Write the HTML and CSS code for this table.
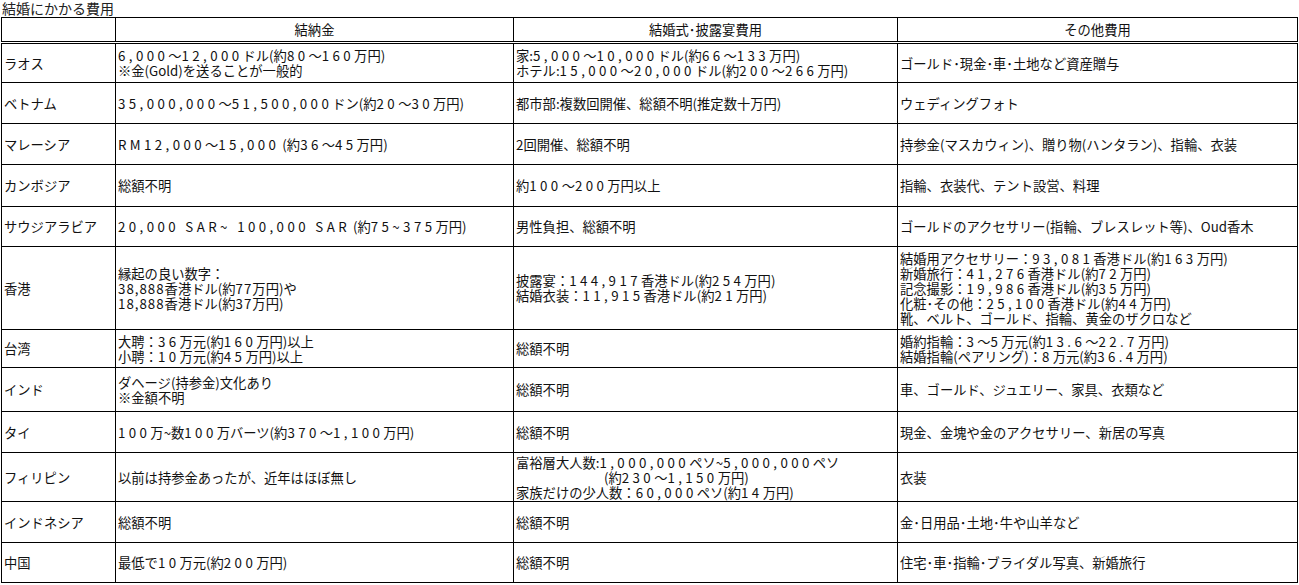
FILE: index.html
```html
<!DOCTYPE html>
<html lang="ja">
<head>
<meta charset="utf-8">
<title>結婚にかかる費用</title>
<link rel="stylesheet" href="styles.css">
</head>
<body>
<h1 class="title">結婚にかかる費用</h1>
<table class="costs">
  <colgroup>
    <col class="c-country">
    <col class="c-yuino">
    <col class="c-ceremony">
    <col class="c-other">
  </colgroup>
  <thead>
    <tr class="head">
      <th></th>
      <th>結納金</th>
      <th>結婚式･披露宴費用</th>
      <th>その他費用</th>
    </tr>
  </thead>
  <tbody>
    <tr class="r40">
      <td>ラオス</td>
      <td><span class="n">6,000</span>～<span class="n">12,000</span>ドル(約<span class="n">80</span>～<span class="n">160</span>万円)<br>※金(Gold)を送ることが一般的</td>
      <td>家:<span class="n">5,000</span>～<span class="n">10,000</span>ドル(約<span class="n">66</span>～<span class="n">133</span>万円)<br>ホテル:<span class="n">15,000</span>～<span class="n">20,000</span>ドル(約<span class="n">200</span>～<span class="n">266</span>万円)</td>
      <td>ゴールド･現金･車･土地など資産贈与</td>
    </tr>
    <tr class="r41">
      <td>ベトナム</td>
      <td><span class="n">35,000,000</span>～<span class="n">51,500,000</span>ドン(約<span class="n">20</span>～<span class="n">30</span>万円)</td>
      <td>都市部:複数回開催、総額不明(推定数十万円)</td>
      <td>ウェディングフォト</td>
    </tr>
    <tr class="r41">
      <td>マレーシア</td>
      <td><span class="n">RM12,000</span>～<span class="n">15,000</span> (約<span class="n">36</span>～<span class="n">45</span>万円)</td>
      <td>2回開催、総額不明</td>
      <td>持参金(マスカウィン)、贈り物(ハンタラン)、指輪、衣装</td>
    </tr>
    <tr class="r42">
      <td>カンボジア</td>
      <td>総額不明</td>
      <td>約<span class="n">100</span>～<span class="n">200</span>万円以上</td>
      <td>指輪、衣装代、テント設営、料理</td>
    </tr>
    <tr class="r40">
      <td>サウジアラビア</td>
      <td><span class="n">20,000 SAR~ 100,000 SAR</span> (約<span class="n">75~375</span>万円)</td>
      <td>男性負担、総額不明</td>
      <td>ゴールドのアクセサリー(指輪、ブレスレット等)、Oud香木</td>
    </tr>
    <tr class="r83">
      <td class="lift">香港</td>
      <td class="lift">縁起の良い数字：<br><span class="m">38,888</span>香港ドル(約<span class="m">77</span>万円)や<br><span class="m">18,888</span>香港ドル(約<span class="m">37</span>万円)</td>
      <td>披露宴：<span class="n">144,917</span>香港ドル(約<span class="n">254</span>万円)<br>結婚衣装：<span class="n">11,915</span>香港ドル(約<span class="n">21</span>万円)</td>
      <td class="lh16">結婚用アクセサリー：<span class="n">93,081</span>香港ドル(約<span class="n">163</span>万円)<br>新婚旅行：<span class="n">41,276</span>香港ドル(約<span class="n">72</span>万円)<br>記念撮影：<span class="n">19,986</span>香港ドル(約<span class="n">35</span>万円)<br>化粧･その他：<span class="n">25,100</span>香港ドル(約<span class="n">44</span>万円)<br>靴、ベルト、ゴールド、指輪、黄金のザクロなど</td>
    </tr>
    <tr class="r38">
      <td>台湾</td>
      <td>大聘：<span class="n">36</span>万元(約<span class="n">160</span>万円)以上<br>小聘：<span class="n">10</span>万元(約<span class="n">45</span>万円)以上</td>
      <td>総額不明</td>
      <td>婚約指輪：<span class="n">3</span>～<span class="n">5</span>万元(約<span class="n">13.6</span>～<span class="n">22.7</span>万円)<br>結婚指輪(ペアリング)：<span class="n">8</span>万元(約<span class="n">36.4</span>万円)</td>
    </tr>
    <tr class="r44">
      <td>インド</td>
      <td>ダヘージ(持参金)文化あり<br>※金額不明</td>
      <td>総額不明</td>
      <td>車、ゴールド、ジュエリー、家具、衣類など</td>
    </tr>
    <tr class="r41">
      <td>タイ</td>
      <td><span class="n">100</span>万~数<span class="n">100</span>万バーツ(約<span class="n">370</span>～<span class="n">1,100</span>万円)</td>
      <td>総額不明</td>
      <td>現金、金塊や金のアクセサリー、新居の写真</td>
    </tr>
    <tr class="r49">
      <td>フィリピン</td>
      <td>以前は持参金あったが、近年はほぼ無し</td>
      <td class="lh18">富裕層大人数:<span class="n">1,000,000</span>ペソ~<span class="n">5,000,000</span>ペソ<br><span class="indent">(約<span class="n">230</span>～<span class="n">1,150</span>万円)</span><br>家族だけの少人数：<span class="n">60,000</span>ペソ(約<span class="n">14</span>万円)</td>
      <td>衣装</td>
    </tr>
    <tr class="r41">
      <td>インドネシア</td>
      <td>総額不明</td>
      <td>総額不明</td>
      <td>金･日用品･土地･牛や山羊など</td>
    </tr>
    <tr class="r40">
      <td>中国</td>
      <td>最低で<span class="n">10</span>万元(約<span class="n">200</span>万円)</td>
      <td>総額不明</td>
      <td>住宅･車･指輪･ブライダル写真、新婚旅行</td>
    </tr>
  </tbody>
</table>
</body>
</html>
```

FILE: styles.css
```css
html, body {
  margin: 0;
  padding: 0;
  background: #ffffff;
}

body {
  font-family: "Noto Sans CJK JP", "Noto Sans", sans-serif;
  font-size: 13.3px;
  color: #111111;
}

.title {
  margin: 0 0 0 2px;
  height: 17px;
  font-size: 14px;
  font-weight: normal;
  line-height: 16px;
  color: #222222;
}

.costs {
  margin-left: 1px;
  width: 1297px;
  table-layout: fixed;
  border-collapse: collapse;
}

.c-country { width: 114px; }
.c-yuino { width: 398px; }
.c-ceremony { width: 384px; }
.c-other { width: 400px; }

.costs th,
.costs td {
  border: 1px solid #000000;
  padding: 0 2px;
  line-height: 15px;
  vertical-align: middle;
  white-space: nowrap;
  overflow: hidden;
  text-align: left;
}

.costs th {
  font-weight: normal;
  text-align: center;
  border-bottom: 3px double #000000;
}

.head { height: 25px; }
.r38 { height: 38px; }
.r40 { height: 40px; }
.r41 { height: 41px; }
.r42 { height: 42px; }
.r44 { height: 44px; }
.r49 { height: 49px; }
.r83 { height: 83px; }

/* wide-set figures */
.n { letter-spacing: 3.4px; }
.m { letter-spacing: 1px; }

.lift { padding-bottom: 14px; }
.lh16 { line-height: 16px; }
.lh18 { line-height: 17px; }
.indent { padding-left: 88px; }
```
